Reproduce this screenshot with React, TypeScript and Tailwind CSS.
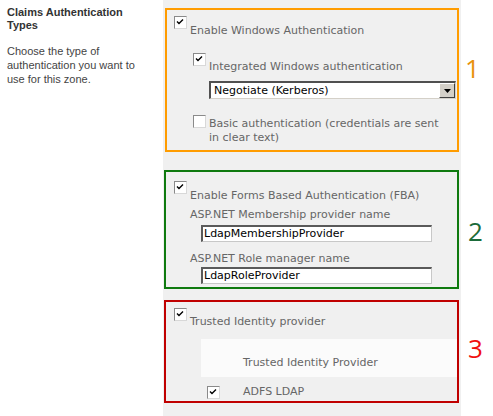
import React from 'react'

function Check({ checked = true }: { checked?: boolean }) {
  return (
    <div className="w-[13px] h-[13px] shrink-0 border border-t-[#8a8a8a] border-l-[#8a8a8a] border-b-[#d8d8d8] border-r-[#d8d8d8] bg-white">
      {checked && (
        <svg width="11" height="11" viewBox="0 0 11 11" className="block">
          <path d="M2 4.5 L4 6.5 L8 2.5" fill="none" stroke="#000" strokeWidth="1.4" />
        </svg>
      )}
    </div>
  )
}

function TextBox({ value }: { value: string }) {
  return (
    <div className="ml-[27px] w-[231px] h-[17px] bg-white border-t-2 border-l-2 border-t-[#5a5a5a] border-l-[#5a5a5a] border-b border-r border-b-[#c8c8c8] border-r-[#c8c8c8] text-black leading-[14px] pl-[1px]">
      {value}
    </div>
  )
}

export default function App() {
  return (
    <div className="flex w-[493px] h-[416px] bg-white overflow-hidden">
      <div className="w-[163px] pl-[7px] pt-[6px] text-[11px] text-[#444]" style={{ fontFamily: '"Liberation Sans", Arial, sans-serif' }}>
        <div className="font-bold leading-[13px] text-[#333]">
          Claims Authentication
          <br />
          Types
        </div>
        <div className="mt-[12px] leading-[14px]">
          Choose the type of
          <br />
          authentication you want to
          <br />
          use for this zone.
        </div>
      </div>

      <div className="w-[298px] bg-[#f0f0f0] pt-[8px] text-[11px] leading-[14px] text-[#666]" style={{ fontFamily: '"DejaVu Sans", Verdana, sans-serif' }}>
        {/* 1 - windows auth */}
        <div className="relative ml-[2px] w-[294px] h-[144px] border-2 border-[#ff9c00] pl-[7px] pt-[6px]">
          <div className="flex items-start gap-[3px]">
            <Check />
            <span className="mt-[8px]">Enable Windows Authentication</span>
          </div>
          <div className="flex items-start gap-[3px] ml-[19px] mt-[15px]">
            <Check />
            <span className="mt-[7px]">Integrated Windows authentication</span>
          </div>
          <div className="ml-[35px] mt-[7px] w-[247px] h-[18px] flex bg-white border-t-2 border-l-2 border-t-[#505050] border-l-[#505050] border-b border-r border-b-[#d4d0c8] border-r-[#d4d0c8]">
            <span className="flex-1 pl-[3px] text-black leading-[15px]">Negotiate (Kerberos)</span>
            <div className="w-[16px] h-[15px] bg-[#d4d0c8] border border-t-white border-l-white border-b-[#404040] border-r-[#404040] flex items-center justify-center">
              <svg width="7" height="4" viewBox="0 0 7 4">
                <path d="M0 0 H7 L3.5 4 Z" fill="#000" />
              </svg>
            </div>
          </div>
          <div className="flex items-start gap-[3px] ml-[19px] mt-[16px]">
            <Check checked={false} />
            <span className="mt-[2px]">
              Basic authentication (credentials are sent
              <br />
              in clear text)
            </span>
          </div>
          <span className="absolute left-[298px] top-[45px] text-[26px] leading-[26px] text-[#e8920c]" style={{ fontFamily: '"Open Sans", sans-serif' }}>
            1
          </span>
        </div>

        {/* 2 - forms based */}
        <div className="relative ml-[1px] mt-[18px] w-[295px] h-[119px] border-2 border-[#0f7a0f] pl-[8px] pt-[9px]">
          <div className="flex items-start gap-[3px]">
            <Check />
            <span className="mt-[8px]">Enable Forms Based Authentication (FBA)</span>
          </div>
          <div className="ml-[16px] mt-[5px]">ASP.NET Membership provider name</div>
          <div className="mt-[3px]">
            <TextBox value="LdapMembershipProvider" />
          </div>
          <div className="ml-[16px] mt-[10px]">ASP.NET Role manager name</div>
          <div className="mt-[1px]">
            <TextBox value="LdapRoleProvider" />
          </div>
          <span className="absolute left-[302px] top-[46px] text-[26px] leading-[26px] text-[#1b6b3a]" style={{ fontFamily: '"Open Sans", sans-serif' }}>
            2
          </span>
        </div>

        {/* 3 - trusted identity */}
        <div className="relative ml-[1px] mt-[11px] w-[295px] h-[103px] border-2 border-[#c00000] pl-[8px] pt-[6px]">
          <div className="flex items-start gap-[3px]">
            <Check />
            <span className="mt-[7px]">Trusted Identity provider</span>
          </div>
          <div className="ml-[27px] mt-[10px] w-[256px] h-[38px] bg-[#fbfbfb] pl-[42px] pt-[17px]">
            Trusted Identity Provider
          </div>
          <div className="flex items-start ml-[33px] mt-[9px] gap-[23px]">
            <Check />
            <span className="-mt-[1px]">ADFS LDAP</span>
          </div>
          <span className="absolute left-[302px] top-[33px] text-[26px] leading-[26px] text-[#f01010]" style={{ fontFamily: '"Open Sans", sans-serif' }}>
            3
          </span>
        </div>
      </div>
    </div>
  )
}
